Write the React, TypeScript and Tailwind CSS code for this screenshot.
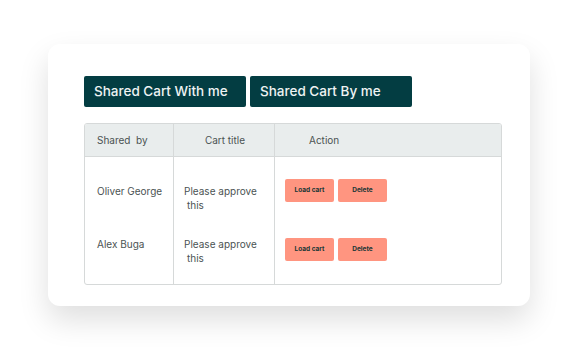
const rows = [
  { name: "Oliver George", title: "Please approve", textPad: "pt-[27px]", btnPad: "pt-[22px]", h: "h-[66px]" },
  { name: "Alex Buga", title: "Please approve", textPad: "pt-[14px]", btnPad: "pt-[15px]", h: "h-[61px]" },
];

const App = () => {
  return (
    <div className="w-[578px] h-[357px] bg-white pl-[48px] pt-[44px] font-['Inter',sans-serif]">
      <div className="w-[482px] h-[262px] bg-white rounded-[12px] shadow-[0_14px_30px_rgba(0,0,0,0.13)] pl-[36px] pr-[28px] pt-[32px]">
        <div className="flex gap-[4px]">
          <button className="w-[162px] h-[31px] bg-[#033d42] rounded-[2px] text-[#eef3f3] text-[13.5px] font-medium text-left pl-[10px]">
            Shared Cart With me
          </button>
          <button className="w-[162px] h-[31px] bg-[#033d42] rounded-[2px] text-[#eef3f3] text-[13.5px] font-medium text-left pl-[10px]">
            Shared Cart By me
          </button>
        </div>

        <div className="mt-[16px] border border-[#d6d9d9] rounded-[3px] overflow-hidden text-[#4b5353]">
          <div className="grid grid-cols-[89px_101px_1fr] h-[33px] bg-[#e9eded] border-b border-[#d6d9d9] text-[10px] items-center">
            <div className="pl-[12px] border-r border-[#d6d9d9] h-full flex items-center">Shared&nbsp;&nbsp;by</div>
            <div className="border-r border-[#d6d9d9] h-full flex items-center justify-center pl-[2px]">Cart title</div>
            <div className="pl-[34px]">Action</div>
          </div>
          {rows.map((r) => (
            <div key={r.name} className={`grid grid-cols-[89px_101px_1fr] text-[10px] ${r.h}`}>
              <div className={`pl-[12px] border-r border-[#d6d9d9] ${r.textPad}`}>{r.name}</div>
              <div className={`pl-[10px] border-r border-[#d6d9d9] leading-[14px] ${r.textPad}`}>
                <div>{r.title}</div>
                <div className="pl-[3px]">this</div>
              </div>
              <div className={`pl-[10px] flex gap-[4px] ${r.btnPad}`}>
                <button className="w-[49px] h-[23px] bg-[#ff9580] rounded-[2px] text-[6.5px] font-bold text-[#173535]">
                  Load cart
                </button>
                <button className="w-[49px] h-[23px] bg-[#ff9580] rounded-[2px] text-[6.5px] font-bold text-[#173535]">
                  Delete
                </button>
              </div>
            </div>
          ))}
        </div>
      </div>
    </div>
  );
};

export default App;
